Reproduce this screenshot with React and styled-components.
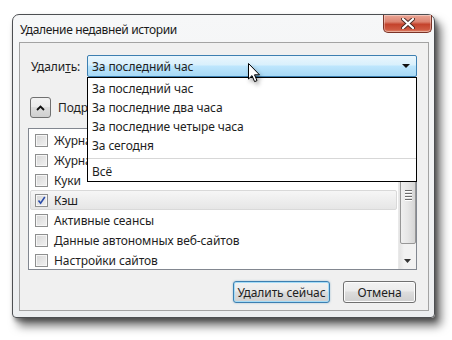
import React from "react";
import styled, { createGlobalStyle } from "styled-components";

const GlobalStyle = createGlobalStyle`
  html, body {
    margin: 0;
    padding: 0;
    background: #ffffff;
  }
  body {
    font-family: "Noto Sans", "Open Sans", sans-serif;
    font-size: 12px;
    letter-spacing: -0.1px;
    color: #1e1e1e;
  }
`;

const Stage = styled.div`
  position: relative;
  width: 452px;
  height: 340px;
  padding: 14px 0 0 12px;
  box-sizing: border-box;
  overflow: hidden;
`;

const Window = styled.div`
  width: 423px;
  height: 304px;
  box-sizing: border-box;
  display: flex;
  flex-direction: column;
  border: 1px solid #4d4f52;
  border-radius: 7px 7px 4px 4px;
  background: linear-gradient(180deg, #f6f7f8 0%, #eceef0 100%);
  box-shadow: 6px 8px 10px rgba(0, 0, 0, 0.55), 2px 3px 4px rgba(0, 0, 0, 0.35);
`;

const TitleBar = styled.div`
  height: 27px;
  display: flex;
  align-items: flex-start;
  padding-left: 7px;
  flex-shrink: 0;
`;

const Title = styled.span`
  margin-top: 6px;
  font-size: 12px;
  color: #1a1a1a;
  letter-spacing: -0.35px;
`;

const CloseButton = styled.div`
  margin-left: auto;
  margin-right: 2px;
  width: 49px;
  height: 18px;
  box-sizing: border-box;
  border: 1px solid #7a3327;
  border-top: none;
  border-radius: 0 0 5px 5px;
  background: linear-gradient(180deg, #eba696 0%, #dc8370 40%, #c4432c 55%, #cf5a42 85%, #e08a6f 100%);
  box-shadow: inset 0 0 0 1px rgba(255, 255, 255, 0.35);
  display: flex;
  align-items: center;
  justify-content: center;
`;

const Client = styled.div`
  flex: 1;
  margin: 0 5px 6px 6px;
  border: 1px solid #a3a3a3;
  background: #f0f0f0;
  display: flex;
  flex-direction: column;
  position: relative;
`;

const RangeRow = styled.div`
  display: flex;
  align-items: center;
  margin: 12px 11px 0 11px;
  height: 22px;
`;

const Label = styled.span`
  width: 56px;
  flex-shrink: 0;
  u {
    text-decoration: underline;
  }
`;

const SelectWrap = styled.div`
  flex: 1;
  position: relative;
  height: 22px;
`;

const SelectBox = styled.div`
  height: 22px;
  box-sizing: border-box;
  border: 1px solid #3c7fb1;
  border-radius: 2px;
  background: linear-gradient(180deg, #eaf6fd 0%, #d9f0fc 45%, #bee6fd 50%, #a7d9f5 100%);
  display: flex;
  align-items: center;
  padding: 0 0 0 4px;
`;

const SelectText = styled.span`
  flex: 1;
`;

const Arrow = styled.span`
  width: 0;
  height: 0;
  border-left: 4px solid transparent;
  border-right: 4px solid transparent;
  border-top: 4px solid #111;
  margin-right: 6px;
`;

const Dropdown = styled.div`
  position: absolute;
  left: 0;
  top: 22px;
  width: 330px;
  box-sizing: border-box;
  border: 1px solid #000;
  background: #fff;
  padding-top: 1px;
  z-index: 5;
`;

const Option = styled.div`
  height: 19px;
  line-height: 19px;
  padding-left: 4px;
`;

const Separator = styled.div`
  height: 1px;
  background: #d7d7d7;
  margin: 3px 0;
`;

const DetailsRow = styled.div`
  display: flex;
  align-items: center;
  margin: 20px 0 0 10px;
  height: 21px;
  gap: 7px;
`;

const ToggleButton = styled.div`
  width: 21px;
  height: 21px;
  box-sizing: border-box;
  border: 1px solid #707070;
  border-radius: 3px;
  background: linear-gradient(180deg, #f2f2f2 0%, #ebebeb 45%, #dddddd 50%, #cfcfcf 100%);
  display: flex;
  align-items: center;
  justify-content: center;
`;

const ListBox = styled.div`
  margin: 10px 0 0 8px;
  width: 389px;
  height: 142px;
  box-sizing: border-box;
  border: 1px solid #828790;
  background: #fff;
  display: flex;
`;

const Rows = styled.div`
  flex: 1;
  padding: 1px 1px 0 1px;
  overflow: hidden;
`;

const Row = styled.div`
  height: 20px;
  box-sizing: border-box;
  display: flex;
  align-items: center;
  padding-left: 4px;
  gap: 6px;
  border: 1px solid ${(p) => (p.$hover ? "#d9d9d9" : "transparent")};
  border-radius: 2px;
  background: ${(p) =>
    p.$hover ? "linear-gradient(180deg, #f6f6f6 0%, #e6e6e6 100%)" : "transparent"};
`;

const Check = styled.span`
  width: 13px;
  height: 13px;
  box-sizing: border-box;
  border: 1px solid #8e8f8f;
  background: linear-gradient(135deg, #d6d6d6 0%, #f2f2f2 100%);
  box-shadow: inset 0 0 0 1px #f6f6f6;
  display: flex;
  align-items: center;
  justify-content: center;
  flex-shrink: 0;
`;

const ScrollBar = styled.div`
  width: 17px;
  display: flex;
  flex-direction: column;
  background: linear-gradient(90deg, #e3e3e3 0%, #f2f2f2 30%, #f2f2f2 100%);
  border-left: 1px solid #e9e9e9;
`;

const ScrollArrow = styled.div`
  height: 17px;
  display: flex;
  align-items: center;
  justify-content: center;
  flex-shrink: 0;
`;

const ScrollTrack = styled.div`
  flex: 1;
  padding: 0 0 7px 1px;
  display: flex;
  flex-direction: column;
`;

const Thumb = styled.div`
  height: 98px;
  box-sizing: border-box;
  border: 1px solid #979797;
  border-radius: 2px;
  background: linear-gradient(90deg, #f0f0f0 0%, #e6e6e6 50%, #d5d5d5 100%);
  display: flex;
  flex-direction: column;
  align-items: center;
  justify-content: center;
  gap: 2px;
`;

const Grip = styled.span`
  width: 7px;
  height: 1px;
  background: #6d6d6d;
  box-shadow: 0 1px 0 #ffffff;
`;

const Footer = styled.div`
  display: flex;
  justify-content: flex-end;
  gap: 13px;
  margin: 11px 12px 0 0;
`;

const Button = styled.div`
  width: ${(p) => p.$w}px;
  height: 22px;
  box-sizing: border-box;
  border: 1px solid ${(p) => (p.$default ? "#3c7fb1" : "#707070")};
  border-radius: 3px;
  background: linear-gradient(180deg, #f2f2f2 0%, #ebebeb 45%, #dddddd 50%, #cfcfcf 100%);
  box-shadow: ${(p) =>
    p.$default ? "inset 0 0 0 1px #a5dcf7, 0 0 2px rgba(60,127,177,0.5)" : "inset 0 0 0 1px #fcfcfc"};
  display: flex;
  align-items: center;
  justify-content: center;
`;

const Cursor = styled.svg`
  position: absolute;
  left: 248px;
  top: 63px;
  filter: drop-shadow(2px 3px 2px rgba(0, 0, 0, 0.35));
  z-index: 10;
`;

const options = ["За последний час", "За последние два часа", "За последние четыре часа", "За сегодня"];

const items = [
  { label: "Журнал посещений и загрузок" },
  { label: "Журнал форм и поиска" },
  { label: "Куки" },
  { label: "Кэш", checked: true, hover: true },
  { label: "Активные сеансы" },
  { label: "Данные автономных веб-сайтов" },
  { label: "Настройки сайтов" },
];

const App = () => {
  return (
    <Stage>
      <GlobalStyle />
      <Window>
        <TitleBar>
          <Title>Удаление недавней истории</Title>
          <CloseButton>
            <svg width="14" height="11" viewBox="0 0 14 11">
              <path d="M2 1 L12 10 M12 1 L2 10" stroke="#4a2a24" strokeWidth="4" strokeLinecap="round" />
              <path d="M2 1 L12 10 M12 1 L2 10" stroke="#ffffff" strokeWidth="2.2" strokeLinecap="round" />
            </svg>
          </CloseButton>
        </TitleBar>
        <Client>
          <RangeRow>
            <Label>
              Удали<u>т</u>ь:
            </Label>
            <SelectWrap>
              <SelectBox>
                <SelectText>За последний час</SelectText>
                <Arrow />
              </SelectBox>
              <Dropdown>
                {options.map((o) => (
                  <Option key={o}>{o}</Option>
                ))}
                <Separator />
                <Option>Всё</Option>
              </Dropdown>
            </SelectWrap>
          </RangeRow>

          <DetailsRow>
            <ToggleButton>
              <svg width="9" height="6" viewBox="0 0 9 6">
                <path d="M1 5 L4.5 1.5 L8 5" fill="none" stroke="#111" strokeWidth="1.8" />
              </svg>
            </ToggleButton>
            <span>Подробности</span>
          </DetailsRow>

          <ListBox>
            <Rows>
              {items.map((it) => (
                <Row key={it.label} $hover={it.hover}>
                  <Check>
                    {it.checked && (
                      <svg width="9" height="9" viewBox="0 0 9 9">
                        <path d="M1.5 4.5 L3.6 7.2 L7.8 1" fill="none" stroke="#2c4daa" strokeWidth="1.6" />
                      </svg>
                    )}
                  </Check>
                  <span>{it.label}</span>
                </Row>
              ))}
            </Rows>
            <ScrollBar>
              <ScrollArrow>
                <svg width="7" height="4" viewBox="0 0 7 4">
                  <path d="M0 4 L3.5 0 L7 4 Z" fill="#333" />
                </svg>
              </ScrollArrow>
              <ScrollTrack>
                <Thumb>
                  <Grip />
                  <Grip />
                  <Grip />
                  <Grip />
                </Thumb>
              </ScrollTrack>
              <ScrollArrow>
                <svg width="7" height="4" viewBox="0 0 7 4">
                  <path d="M0 0 L3.5 4 L7 0 Z" fill="#333" />
                </svg>
              </ScrollArrow>
            </ScrollBar>
          </ListBox>

          <Footer>
            <Button $w={97} $default>
              Удалить сейчас
            </Button>
            <Button $w={73}>Отмена</Button>
          </Footer>
        </Client>
      </Window>
      <Cursor width="13" height="20" viewBox="0 0 13 20">
        <path d="M0.5 0.5 L0.5 16 L4 12.6 L6.6 18.6 L9 17.6 L6.5 11.8 L11.5 11.8 Z" fill="#fff" stroke="#000" strokeWidth="1" strokeLinejoin="round" />
      </Cursor>
    </Stage>
  );
};

export default App;
